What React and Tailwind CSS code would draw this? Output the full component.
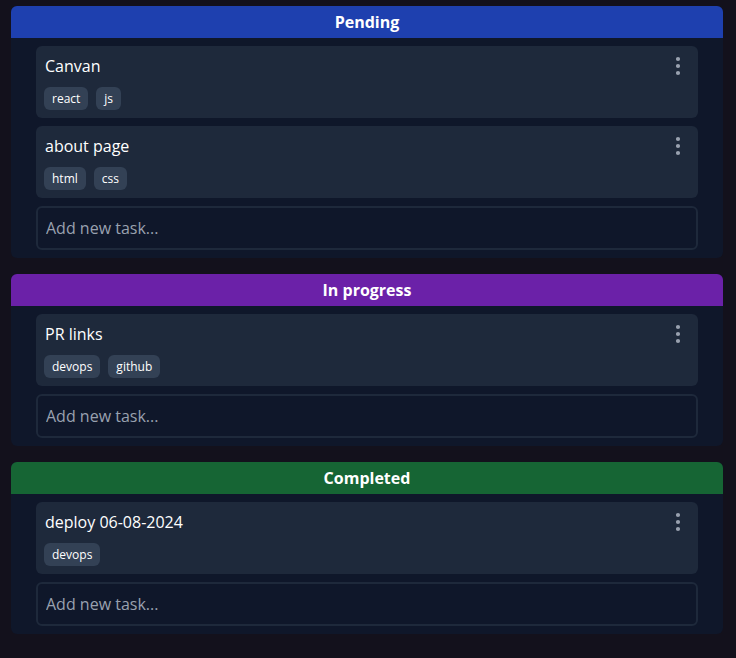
import { EllipsisVertical } from "lucide-react";

const columns = [
  {
    title: "Pending",
    color: "bg-[#1e40af]",
    tasks: [
      { name: "Canvan", tags: ["react", "js"] },
      { name: "about page", tags: ["html", "css"] },
    ],
  },
  {
    title: "In progress",
    color: "bg-[#6b21a8]",
    tasks: [{ name: "PR links", tags: ["devops", "github"] }],
  },
  {
    title: "Completed",
    color: "bg-[#166534]",
    tasks: [{ name: "deploy 06-08-2024", tags: ["devops"] }],
  },
];

function TaskCard({ task }) {
  return (
    <div className="bg-[#1e293b] rounded-md px-2 pt-2 pb-2">
      <div className="flex items-center justify-between">
        <span className="text-white text-base leading-6 pl-px">{task.name}</span>
        <EllipsisVertical size={24} className="text-gray-400" strokeWidth={2.2} />
      </div>
      <div className="flex gap-2 mt-[9px]">
        {task.tags.map((tag) => (
          <span
            key={tag}
            className="h-[23px] flex items-center px-2 rounded-md bg-[#334155] text-white text-xs"
          >
            {tag}
          </span>
        ))}
      </div>
    </div>
  );
}

function Column({ col }) {
  return (
    <div className="bg-[#0f172a] rounded-md overflow-hidden">
      <div className={`${col.color} h-8 flex items-center justify-center text-white font-bold text-base`}>
        {col.title}
      </div>
      <div className="px-[25px] pt-2 pb-2 flex flex-col gap-2">
        {col.tasks.map((t) => (
          <TaskCard key={t.name} task={t} />
        ))}
        <input
          className="h-[44px] shrink-0 rounded-md border-2 border-[#1e293b] bg-[#0f172a] px-2 text-base text-white placeholder:text-gray-400 outline-none"
          placeholder="Add new task..."
        />
      </div>
    </div>
  );
}

export default function App() {
  return (
    <div
      className="min-h-[658px] bg-[#13111c] pl-[11px] pr-[13px] pt-[6px]"
      style={{ fontFamily: '"Open Sans", "Noto Sans", sans-serif' }}
    >
      <div className="flex flex-col gap-4">
        {columns.map((c) => (
          <Column key={c.title} col={c} />
        ))}
      </div>
    </div>
  );
}
